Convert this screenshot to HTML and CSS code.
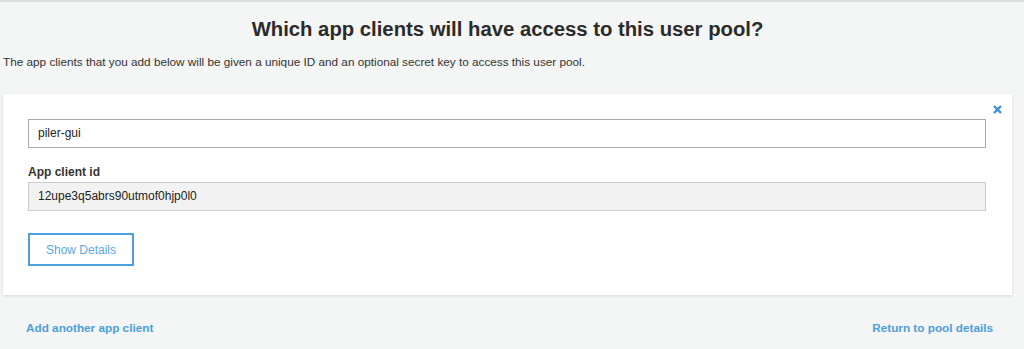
FILE: index.html
```html
<!DOCTYPE html>
<html>
<head>
<meta charset="utf-8">
<link rel="stylesheet" href="styles.css">
</head>
<body>
<div class="page">
  <h1 class="title">Which app clients will have access to this user pool?</h1>
  <p class="intro">The app clients that you add below will be given a unique ID and an optional secret key to access this user pool.</p>
  <div class="card">
    <button class="close" aria-label="Remove">
      <svg width="9" height="9" viewBox="0 0 9 9"><path d="M1 1L8 8M8 1L1 8" stroke="#3b8fd8" stroke-width="2.4" stroke-linecap="butt"/></svg>
    </button>
    <div class="field name-field">piler-gui</div>
    <div class="label">App client id</div>
    <div class="field readonly">12upe3q5abrs90utmof0hjp0l0</div>
    <button class="details">Show Details</button>
  </div>
  <div class="links">
    <a class="link">Add another app client</a>
    <a class="link">Return to pool details</a>
  </div>
</div>
</body>
</html>
```
FILE: styles.css
```css
html, body {
  margin: 0;
  padding: 0;
}
body {
  background: #f4f5f5;
  border-top: 2px solid #dcdddd;
  font-family: "Liberation Sans", Arial, sans-serif;
  color: #333;
  height: 347px;
  overflow: hidden;
}
.page {
  width: 1009px;
  margin-left: 3px;
}
.title {
  margin: 15px 0 0;
  font-size: 20.3px;
  font-weight: bold;
  text-align: center;
  line-height: 24px;
  color: #2b2b2b;
}
.intro {
  margin: 14px 0 0;
  font-size: 11.75px;
  line-height: 14px;
  color: #333;
}
.card {
  position: relative;
  margin-top: 25px;
  background: #fff;
  box-shadow: 0 1px 3px rgba(0,0,0,0.12);
  padding: 25px 26px 29px 25px;
  display: flex;
  flex-direction: column;
  align-items: stretch;
}
.close {
  position: absolute;
  top: 11px;
  right: 10px;
  border: 0;
  background: none;
  padding: 0;
  width: 9px;
  height: 9px;
  display: flex;
}
.field {
  box-sizing: border-box;
  height: 29px;
  border: 1px solid #aaa;
  padding: 0 9px;
  font-size: 12px;
  line-height: 27px;
  color: #222;
}
.readonly {
  background: #f2f2f2;
  border-color: #ccc;
}
.label {
  margin-top: 18px;
  margin-bottom: 3px;
  font-size: 12px;
  font-weight: bold;
  line-height: 13px;
  color: #333;
}
.details {
  align-self: flex-start;
  margin-top: 22px;
  width: 106px;
  height: 33px;
  border: 2px solid #4aa0e0;
  background: #fff;
  color: #5aa8e2;
  font-family: "Liberation Sans", Arial, sans-serif;
  font-size: 12px;
  padding: 0;
}
.links {
  display: flex;
  justify-content: space-between;
  padding: 26px 19px 0 23px;
}
.link {
  font-size: 11.75px;
  font-weight: bold;
  color: #4b9fdd;
  line-height: 14px;
}
```
